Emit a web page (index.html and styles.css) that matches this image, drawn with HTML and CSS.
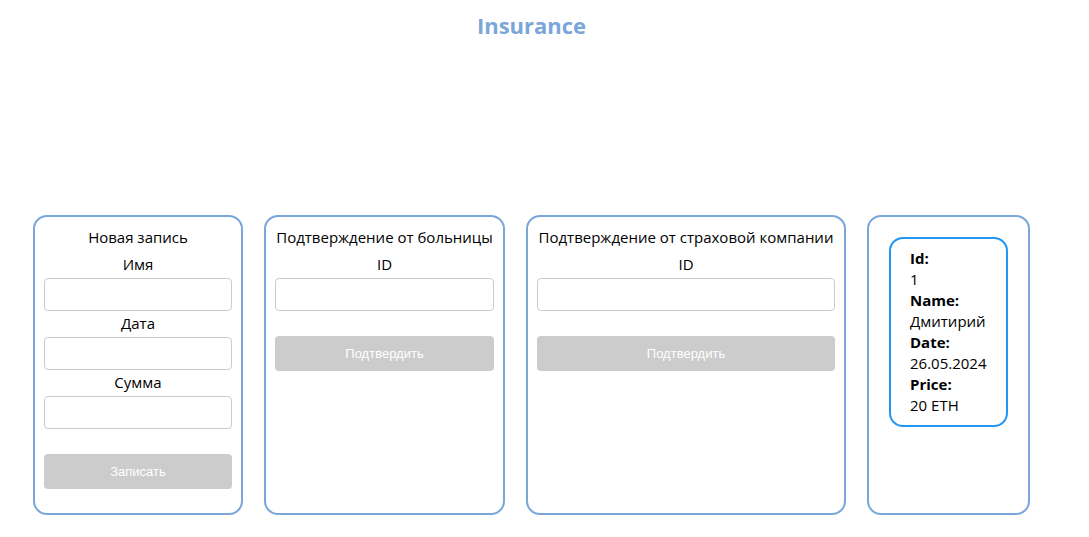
FILE: index.html
```html
<!DOCTYPE html>
<html lang="ru">
<head>
<meta charset="utf-8">
<title>Insurance</title>
<link rel="stylesheet" href="styles.css">
</head>
<body>
<div class="page">
  <h1 class="title">Insurance</h1>
  <main class="cards">
    <section class="card card-new">
      <div class="card-title">Новая запись</div>
      <label class="label">Имя</label>
      <input class="field" type="text">
      <label class="label">Дата</label>
      <input class="field" type="text">
      <label class="label">Сумма</label>
      <input class="field" type="text">
      <button class="btn" disabled>Записать</button>
    </section>
    <section class="card card-hospital">
      <div class="card-title">Подтверждение от больницы</div>
      <label class="label">ID</label>
      <input class="field" type="text">
      <button class="btn" disabled>Подтвердить</button>
    </section>
    <section class="card card-company">
      <div class="card-title">Подтверждение от страховой компании</div>
      <label class="label">ID</label>
      <input class="field" type="text">
      <button class="btn" disabled>Подтвердить</button>
    </section>
    <section class="card card-list">
      <div class="record">
        <div class="key">Id:</div>
        <div class="val">1</div>
        <div class="key">Name:</div>
        <div class="val">Дмитирий</div>
        <div class="key">Date:</div>
        <div class="val">26.05.2024</div>
        <div class="key">Price:</div>
        <div class="val">20 ETH</div>
      </div>
    </section>
  </main>
</div>
</body>
</html>
```
FILE: styles.css
```css
html, body {
  margin: 0;
  padding: 0;
  background: #fff;
}
body {
  font-family: "Open Sans", "Noto Sans", sans-serif;
  font-size: 15px;
  color: #000;
}
.page {
  width: 1063px;
}
.title {
  margin: 0;
  padding-top: 8px;
  line-height: 34px;
  font-size: 22px;
  font-weight: 700;
  color: #7ba6d9;
  text-align: center;
}
.cards {
  display: flex;
  justify-content: center;
  gap: 21px;
  margin-top: 173px;
}
.card {
  box-sizing: border-box;
  height: 300px;
  border: 2px solid #7aa6da;
  border-radius: 14px;
  padding: 10px 9px;
  display: flex;
  flex-direction: column;
  text-align: center;
}
.card-new { width: 210px; }
.card-hospital { width: 241px; }
.card-company { width: 320px; }
.card-list { width: 163px; padding: 20px; }
.card-title {
  line-height: 21px;
  margin-bottom: 4px;
  white-space: nowrap;
}
.label {
  display: block;
  line-height: 21px;
  margin: 2px 0 3px;
}
.field {
  box-sizing: border-box;
  width: 100%;
  height: 33px;
  margin: 0;
  border: 1px solid #cccccc;
  border-radius: 4px;
  background: #fff;
  font: inherit;
}
.btn {
  box-sizing: border-box;
  width: 100%;
  height: 35px;
  margin-top: 25px;
  border: none;
  border-radius: 4px;
  background: #cccccc;
  color: #fff;
  font-family: "Liberation Sans", Arial, sans-serif;
  font-size: 13px;
}
.record {
  box-sizing: border-box;
  width: 119px;
  border: 2px solid #2196f3;
  border-radius: 14px;
  padding: 9px 19px;
  text-align: left;
  line-height: 21px;
}
.key {
  font-weight: 700;
}
```
